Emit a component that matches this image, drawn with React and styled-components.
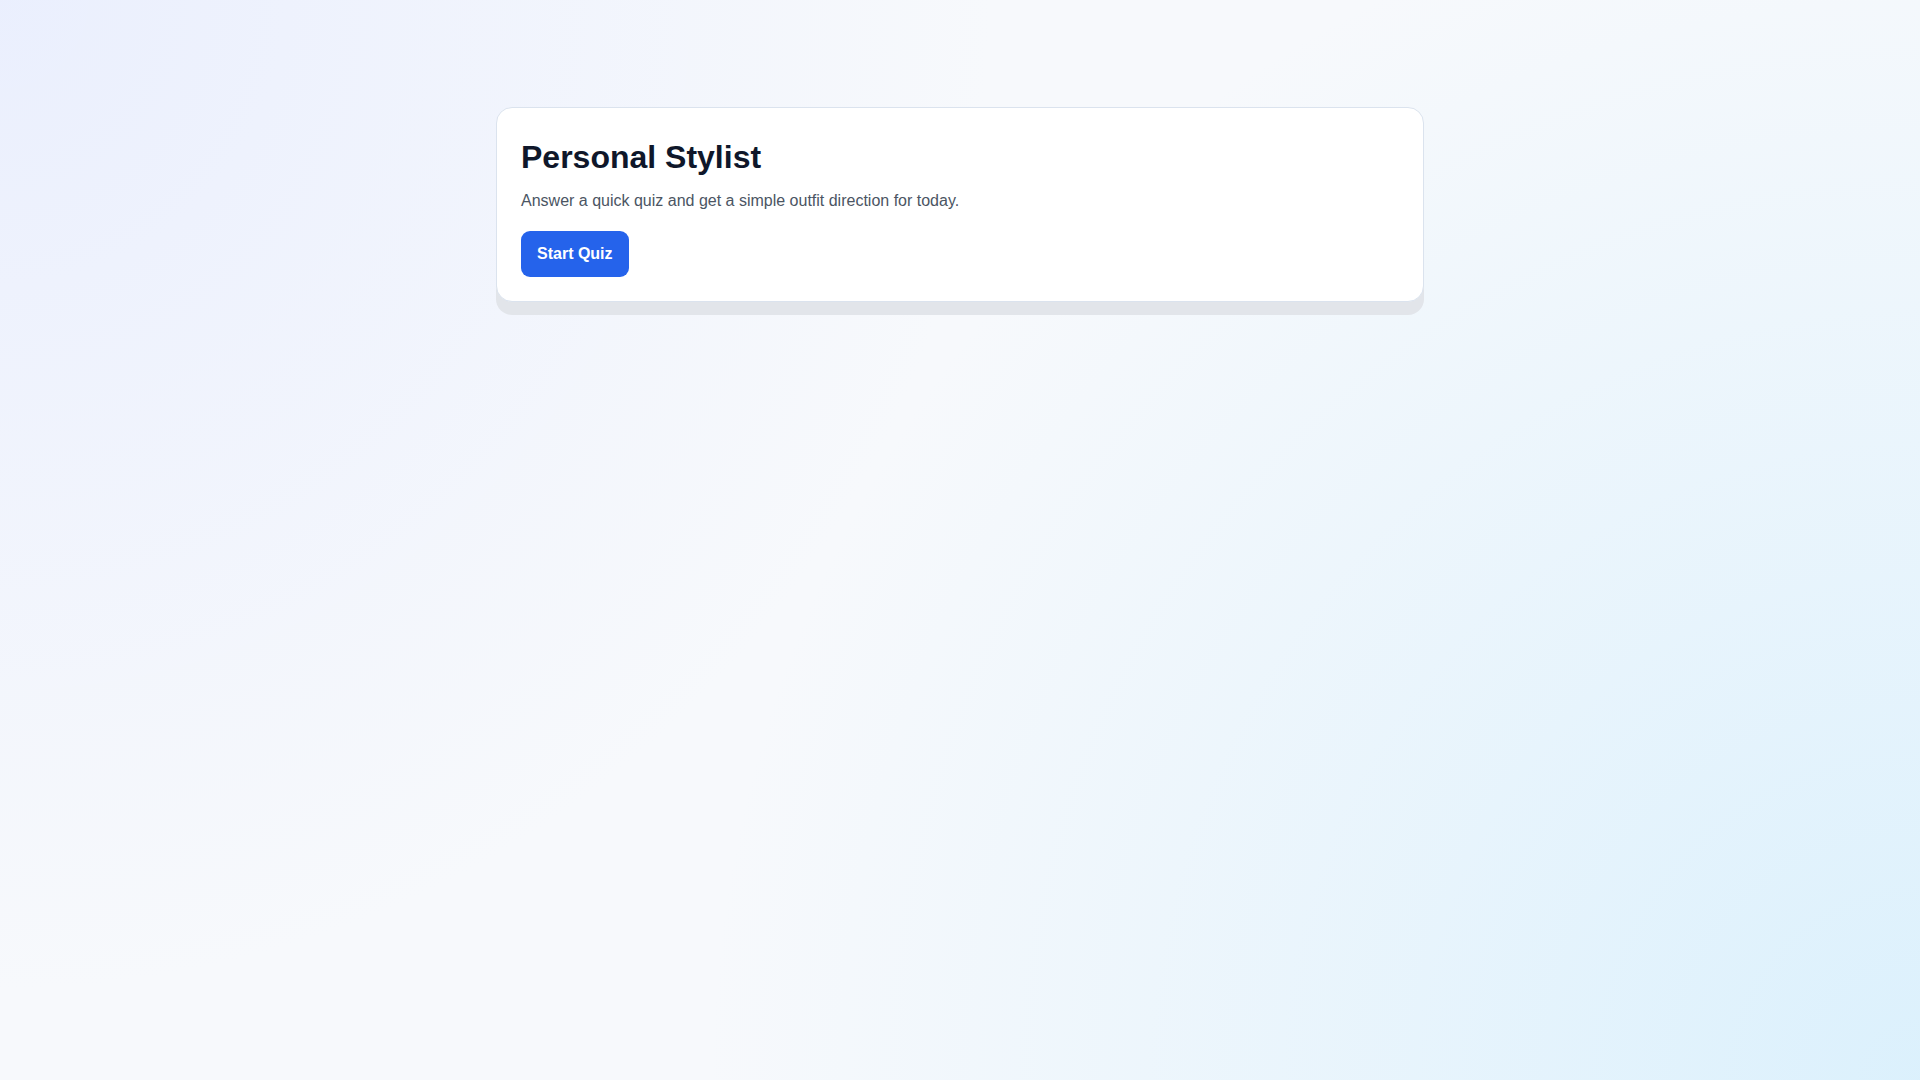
import React from 'react';
import styled, { createGlobalStyle } from 'styled-components';

const GlobalStyle = createGlobalStyle`
  * {
    box-sizing: border-box;
  }

  html, body {
    margin: 0;
    padding: 0;
  }

  body {
    min-height: 100vh;
    font-family: "Liberation Sans", Arial, sans-serif;
    background:
      radial-gradient(circle at 0% 0%, rgba(224, 231, 255, 0.55), transparent 45%),
      radial-gradient(circle at 100% 100%, rgba(186, 230, 253, 0.45), transparent 55%),
      #f7f9fc;
    background-attachment: fixed;
  }
`;

const Page = styled.main`
  max-width: 960px;
  margin: 0 auto;
  padding: 107px 16px 40px;
`;

const Card = styled.section`
  background: #ffffff;
  border: 1px solid #dbe3ee;
  border-radius: 16px;
  padding: 24px;
  box-shadow: 0 13px 0 #e2e5ea;
`;

const Title = styled.h1`
  margin: 3px 0 10px;
  font-size: 32px;
  line-height: 44px;
  font-weight: 700;
  color: #0f172a;
`;

const Subtitle = styled.p`
  margin: 0 0 18px;
  font-size: 16px;
  line-height: 24px;
  color: #4b5563;
`;

const Button = styled.button`
  display: inline-block;
  border: none;
  border-radius: 9px;
  padding: 14px 16px;
  font-family: inherit;
  font-size: 16px;
  line-height: 18px;
  font-weight: 700;
  color: #ffffff;
  background: #2563eb;
  cursor: pointer;
`;

export default function App() {
  return (
    <>
      <GlobalStyle />
      <Page>
        <Card>
          <Title>Personal Stylist</Title>
          <Subtitle>Answer a quick quiz and get a simple outfit direction for today.</Subtitle>
          <Button type="button">Start Quiz</Button>
        </Card>
      </Page>
    </>
  );
}
